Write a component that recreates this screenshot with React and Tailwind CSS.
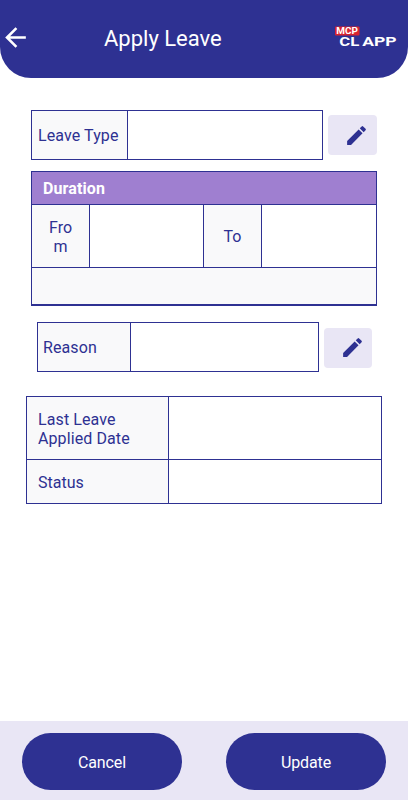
import { MdArrowBack, MdEdit } from 'react-icons/md';

const LABEL_CELL = 'flex shrink-0 items-center border-r border-[#2e3192] bg-[#f9f9fa] pt-0.5';

function Logo() {
  return (
    <svg className="h-[24px] w-[66px]" viewBox="0 0 66 24" role="img" aria-label="MCP CL APP">
      <rect x="2" y="2.5" width="24.5" height="9" rx="1" fill="#d9232f" />
      <g fill="#fff" fontFamily="Roboto, sans-serif" fontWeight="700">
        <text x="3.3" y="9.9" fontSize="8.4" textLength="21.6" lengthAdjust="spacingAndGlyphs">MCP</text>
        <text x="6.3" y="22" fontSize="12.2" textLength="20" lengthAdjust="spacingAndGlyphs">CL</text>
        <text x="29.2" y="22" fontSize="12" textLength="34.4" lengthAdjust="spacingAndGlyphs">APP</text>
      </g>
    </svg>
  );
}

function Header() {
  return (
    <header className="flex h-[78px] items-center rounded-b-[31px] bg-[#2e3192] text-white">
      <button type="button" aria-label="Back" className="-mt-1 w-[104px]">
        <MdArrowBack className="size-[31px]" aria-hidden="true" />
      </button>
      <h1 className="flex-1 text-[22px] leading-[26px]">Apply Leave</h1>
      <div className="-mt-1.5 mr-[9px]">
        <Logo />
      </div>
    </header>
  );
}

function EditButton({ label, className }) {
  return (
    <button
      type="button"
      aria-label={label}
      className={`flex h-10 shrink-0 items-center justify-end rounded-[4px] bg-[#e9e6f5] ${className}`}
    >
      <MdEdit className="size-[25px]" aria-hidden="true" />
    </button>
  );
}

function FooterButton({ children }) {
  return (
    <button type="button" className="h-[57px] w-40 rounded-full bg-[#2e3192] pt-0.5 text-base tracking-[-0.1px] text-white">
      {children}
    </button>
  );
}

export default function App() {
  return (
    <div className="flex h-[800px] w-[408px] flex-col overflow-hidden bg-white font-['Roboto',sans-serif] text-base text-[#2e3192]">
      <Header />

      <main className="flex-1">
        <div className="mt-8 ml-[31px] flex items-center gap-[5px]">
          <div className="flex h-[50px] w-[292px] border border-[#2e3192]">
            <div className={`${LABEL_CELL} w-24 pl-1.5 tracking-[0.1px]`}>Leave Type</div>
          </div>
          <EditButton label="Edit leave type" className="w-[49px] pr-2" />
        </div>

        <section className="mt-[11px] ml-[31px] w-[346px] border border-b-2 border-[#2e3192]">
          <h2 className="flex h-8 items-center bg-[#9f7fd0] pt-0.5 pl-[11px] font-bold tracking-[0.1px] text-white">Duration</h2>
          <div className="flex h-16 border-y border-[#2e3192] text-center">
            <div className={`${LABEL_CELL} w-[58px] justify-center leading-[19px]`}>
              <span>Fro<br />m</span>
            </div>
            <div className="w-[114px] border-r border-[#2e3192]" />
            <div className={`${LABEL_CELL} w-[58px] justify-center`}>To</div>
          </div>
          <div className="h-[36px] bg-[#f9f9fa]" />
        </section>

        <div className="mt-4 ml-[37px] flex items-center gap-[5px]">
          <div className="flex h-[50px] w-[282px] border border-[#2e3192]">
            <div className={`${LABEL_CELL} w-[93px] pl-[5px] tracking-[0.1px]`}>Reason</div>
          </div>
          <EditButton label="Edit reason" className="mt-px w-[48px] pr-[7px]" />
        </div>

        <section className="mt-6 ml-[26px] w-[356px] border border-[#2e3192]">
          <div className="flex h-[63px] border-b border-[#2e3192]">
            <div className={`${LABEL_CELL} w-[142px] pl-[11px] leading-[19px] tracking-[0.1px]`}>
              <span>Last Leave<br />Applied Date</span>
            </div>
          </div>
          <div className="flex h-[43px]">
            <div className={`${LABEL_CELL} w-[142px] pl-[11px]`}>Status</div>
          </div>
        </section>
      </main>

      <footer className="flex h-[79px] items-start justify-between bg-[#e9e6f5] px-[22px] pt-3">
        <FooterButton>Cancel</FooterButton>
        <FooterButton>Update</FooterButton>
      </footer>
    </div>
  );
}
